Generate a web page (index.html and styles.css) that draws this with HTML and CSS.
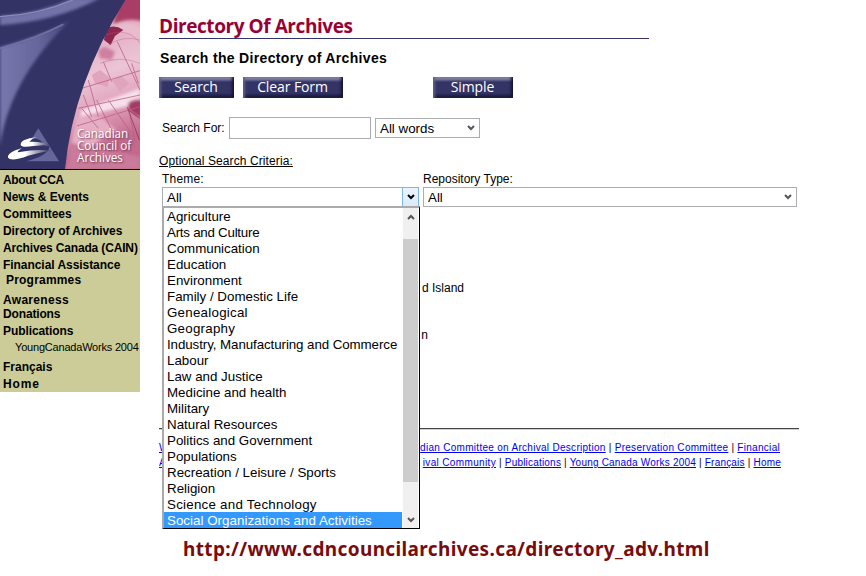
FILE: index.html
```html
<!DOCTYPE html>
<html lang="en">
<head>
<meta charset="utf-8">
<title>Directory Of Archives</title>
<link rel="stylesheet" href="styles.css">
</head>
<body>
<div class="page">
  <aside class="sidebar">
    <div class="banner">
      <svg class="art" viewBox="0 0 420 507" preserveAspectRatio="none" aria-hidden="true">
        <defs>
          <linearGradient id="photo" x1="0" y1="0" x2="0.3" y2="1">
            <stop offset="0" stop-color="#a83a62"/><stop offset=".13" stop-color="#b04a70"/><stop offset=".22" stop-color="#dc9db5"/><stop offset=".6" stop-color="#ecc5d5"/><stop offset=".8" stop-color="#dfa0b9"/><stop offset="1" stop-color="#c2698c"/>
          </linearGradient>
          <linearGradient id="sail" x1="0" y1="0" x2="1" y2="0">
            <stop offset="0" stop-color="#7777ad"/><stop offset=".55" stop-color="#66669c"/><stop offset="1" stop-color="#444479"/>
          </linearGradient>
          <linearGradient id="swoosh" x1="0" y1="0" x2="1" y2="0">
            <stop offset="0" stop-color="#fff"/><stop offset=".4" stop-color="#fff"/><stop offset="1" stop-color="#333366"/>
          </linearGradient>
          <filter id="b1" x="-20%" y="-20%" width="140%" height="140%"><feGaussianBlur stdDeviation="1.2"/></filter>
          <filter id="b2" x="-20%" y="-20%" width="140%" height="140%"><feGaussianBlur stdDeviation="2"/></filter>
          <filter id="b5" x="-20%" y="-20%" width="140%" height="140%"><feGaussianBlur stdDeviation="5"/></filter>
        </defs>
        <rect width="420" height="507" fill="url(#photo)"/>
        <g filter="url(#b5)">
          <path d="M360 -10H430V65Q390 50 340 72Z" fill="#aa3d66"/>
          <path d="M340 78Q390 62 425 85V125Q380 85 320 105Z" fill="#e9bccd"/>
          <path d="M295 150L315 140L345 155L335 180L300 175Z" fill="#cf7f9f"/>
          <path d="M245 330L420 265V310L240 350Z" fill="#f6dfe8"/>
          <path d="M385 310Q400 295 425 300V350Q400 345 385 325Z" fill="#a43a64"/>
          <path d="M230 350L300 350L350 390L270 440L215 430Z" fill="#e6aec3"/>
          <path d="M200 507L215 430L420 470V507Z" fill="#ca7a9a"/>
        </g>
        <g filter="url(#b2)">
          <path d="M318 85Q345 72 370 90L345 108L332 135L312 120Z" fill="#8c2850"/>
          <path d="M275 225L300 210L330 235L322 262L285 250Z M335 240L365 228L388 250L360 275Z" fill="#e0a5bb"/>
        </g>
        <g filter="url(#b1)" fill="none" stroke="#b85c82" stroke-width="3" opacity=".75">
          <path d="M300 190Q360 165 420 190M325 135Q370 105 420 120M318 105Q385 80 420 130" opacity=".5"/>
          <path d="M245 265L420 212M235 325L420 285M230 378L420 320"/>
          <path d="M310 185L335 245M352 125L420 270M395 190L415 250M265 240L295 350M250 285L275 350M245 325L295 385M290 300L335 390M325 300L392 397M386 325L405 425"/>
          <path d="M385 330L420 355M382 322L418 420" stroke="#8f2e55"/>
        </g>
        <path d="M0 0H376Q220 250 195 507H0Z" fill="#333366"/>
        <path d="M0 76V48Q115 42 219 -5H300Q165 65 0 76Z" fill="#7272a8" filter="url(#b5)"/>
        <path d="M0 50Q120 43 218 0" stroke="#8e8ebc" stroke-width="4" fill="none" filter="url(#b2)"/>
        <path d="M0 142Q110 112 210 62Q70 195 20 350Q5 400 0 440Z" fill="url(#sail)" filter="url(#b5)"/>
        <path d="M0 145Q110 115 190 73" stroke="#7070a4" stroke-width="5" fill="none" filter="url(#b2)"/>
        <path d="M115 385L177 484H78Q150 465 148 437H135Q120 413 96 415Z" fill="#66669b"/>
        <path d="M111 411Q60 418 62 434Q64 444 100 438L151 434Q125 424 88 425Q96 415 111 411Z" fill="url(#swoosh)"/>
        <path d="M66 444Q20 458 24 473Q34 486 84 467Q120 456 153 452Q110 446 60 456Q44 459 66 444Z" fill="url(#swoosh)"/>
      </svg>
      <div class="org">Canadian<br>Council of<br>Archives</div>
    </div>
    <nav class="menu">
      <a class="m1">About CCA</a>
      <a class="m2">News &amp; Events</a>
      <a class="m3">Committees</a>
      <a class="m4">Directory of Archives</a>
      <a class="m5">Archives Canada (CAIN)</a>
      <a class="m6">Financial Assistance</a>
      <a class="m7">Programmes</a>
      <a class="m8">Awareness</a>
      <a class="m9">Donations</a>
      <a class="m10">Publications</a>
      <a class="m11">YoungCanadaWorks 2004</a>
      <a class="m12">Français</a>
      <a class="m13">Home</a>
    </nav>
  </aside>
  <main class="main">
    <h1><span>Directory Of Archives</span></h1>
    <h2><span>Search the Directory of Archives</span></h2>
    <div class="buttons">
      <a class="btn search">Search</a>
      <a class="btn clear">Clear Form</a>
      <a class="btn simple">Simple</a>
    </div>
    <div class="query">
      <span class="qlabel">Search For:</span>
      <div class="input"></div>
      <div class="select words"><span>All words</span><svg class="chev" viewBox="0 0 8 6"><path d="M1 1L4 4L7 1"/></svg></div>
    </div>
    <div class="optional"><span>Optional Search Criteria:</span></div>
    <div class="fields">
      <div class="field theme">
        <div class="flabel"><span class="tl">Theme:</span></div>
        <div class="select"><span>All</span><div class="drop"><svg class="chev" viewBox="0 0 8 6"><path d="M1 1L4 4L7 1"/></svg></div></div>
        <div class="popup">
          <ul>
            <li>Agriculture</li>
            <li>Arts and Culture</li>
            <li>Communication</li>
            <li>Education</li>
            <li>Environment</li>
            <li>Family / Domestic Life</li>
            <li class="loose">Genealogical</li>
            <li class="loose">Geography</li>
            <li class="snug">Industry, Manufacturing and Commerce</li>
            <li>Labour</li>
            <li>Law and Justice</li>
            <li>Medicine and health</li>
            <li>Military</li>
            <li>Natural Resources</li>
            <li>Politics and Government</li>
            <li>Populations</li>
            <li>Recreation / Leisure / Sports</li>
            <li>Religion</li>
            <li class="loose">Science and Technology</li>
            <li class="on">Social Organizations and Activities</li>
          </ul>
          <div class="scroll">
            <svg class="chev" viewBox="0 0 8 6"><path d="M1 5L4 2L7 5"/></svg>
            <div class="thumb"></div>
            <svg class="chev" viewBox="0 0 8 6"><path d="M1 1L4 4L7 1"/></svg>
          </div>
        </div>
      </div>
      <div class="field repo">
        <div class="flabel"><span class="rl">Repository Type:</span></div>
        <div class="select"><span>All</span><svg class="chev" viewBox="0 0 8 6"><path d="M1 1L4 4L7 1"/></svg></div>
      </div>
    </div>
    <div class="provinces">
      <div class="pei">d Island</div>
      <div class="sask">n</div>
    </div>
    <hr>
    <footer>
      <div class="row r1"><a>W</a><span><a>dian Committee on Archival Description</a> | <a>Preservation Committee</a> | <a>Financial</a></span></div>
      <div class="row r2"><a>A</a><span><a class="wide">ival Community</a> | <a>Publications</a> | <a>Young Canada Works 2004</a> | <a>Français</a> | <a>Home</a></span></div>
    </footer>
    <div class="url"><span>http://www.cdncouncilarchives.ca/directory_adv.html</span></div>
  </main>
</div>
</body>
</html>
```
FILE: styles.css
```css
* { box-sizing: border-box; }
body { margin: 0; background: #fff; color: #000; font: 12px/16px "Liberation Sans", Arial, sans-serif; }
.page { display: flex; width: 866px; height: 576px; overflow: hidden; }
.sidebar { width: 140px; height: 392px; background: #cccc99; flex: none; }
.banner { position: relative; height: 170px; border-bottom: 1px solid #000; }
.art { display: block; width: 140px; height: 169px; }
.org { position: absolute; left: 77px; top: 127px; font: 11.7px/12px "Open Sans", sans-serif; color: #fff; text-shadow: 1px 1px 2px #6d3450; white-space: nowrap; }
.menu { display: flex; flex-direction: column; padding: 2px 0 0 3px; font-weight: bold; white-space: nowrap; }
.menu a { height: 17px; line-height: 17px; }
.menu .m1 { letter-spacing: -.35px; }
.menu .m4 { letter-spacing: -.08px; }
.menu .m5 { letter-spacing: -.15px; }
.menu .m6 { height: 15px; letter-spacing: -.05px; }
.menu .m7 { height: 20px; padding-left: 3px; letter-spacing: .2px; }
.menu .m8 { height: 14px; letter-spacing: .3px; }
.menu .m9 { letter-spacing: -.15px; }
.menu .m10 { height: 16px; letter-spacing: -.08px; }
.menu .m11 { height: 20px; padding-left: 12px; font-size: 11px; font-weight: normal; letter-spacing: -.2px; }
.menu .m13 { letter-spacing: .9px; }

.main { flex: 1; padding-left: 19px; white-space: nowrap; }
h1 { margin: 0; width: 490px; height: 39px; border-bottom: 1px solid #333366; padding-top: 13px; font: bold 19px/26px "Open Sans", sans-serif; letter-spacing: -.43px; color: #990033; }
h2 { margin: 0; height: 38px; padding: 11px 0 0 1px; font: bold 14px/16px "Liberation Sans", sans-serif; letter-spacing: .33px; }
.buttons { display: flex; height: 21px; }
.btn { height: 21px; padding-right: 1px; color: #fff; text-align: center; font: 14px/20px "Open Sans", sans-serif; letter-spacing: -.1px; background: linear-gradient(#9494ae 0, #7c7ca0 2px, #333366 5px, #333366 16px, #111133 21px); box-shadow: inset 3px 0 3px -1px #62628a, inset -3px 0 3px -1px #111133; }
.search { width: 75px; }
.clear { width: 100px; margin-left: 9px; }
.simple { width: 80px; margin-left: 90px; }
.query { display: flex; height: 56px; padding-top: 19px; }
.qlabel { width: 70px; padding: 3px 0 0 3px; }
.input { width: 142px; height: 22px; border: 1px solid #abadb3; }
.select { display: flex; align-items: center; justify-content: space-between; height: 20px; border: 1px solid #abadb3; padding: 0 4px; font-size: 13.33px; }
.select > span { padding-top: 2px; }
.words { width: 105px; margin: 1px 0 0 4px; }
.chev { width: 8px; height: 6px; fill: none; stroke: #555; stroke-width: 2; flex: none; }
.optional { height: 17px; margin-top: -1px; line-height: 16px; }
.optional span { text-decoration: underline; letter-spacing: .1px; }
.fields { display: flex; padding-left: 3px; }
.flabel { height: 16px; line-height: 16px; margin-top: 1px; }
.tl { letter-spacing: .2px; }
.theme { position: relative; width: 257px; }
.repo { width: 374px; margin-left: 4px; }
.theme .select { padding-right: 0; border-right: 0; }
.drop { display: flex; align-items: center; justify-content: center; width: 17px; height: 20px; border: 1px solid #7eb4ea; background: linear-gradient(#ecf4fc, #d9eafb); }
.drop .chev { stroke: #000; }
.popup { position: absolute; z-index: 2; left: 0; top: 36px; width: 258px; height: 323px; display: flex; background: #fff; border-left: 2px solid #aaa; border-top: 2px solid #aaa; border-right: 1px solid #000; border-bottom: 1px solid #000; }
.popup ul { margin: 0; padding: 0; width: 238px; list-style: none; }
.popup li { height: 16px; padding-left: 3px; font-size: 13.33px; line-height: 18px; }
.popup li:nth-child(2) { letter-spacing: -.25px; }
.popup .snug { letter-spacing: -.08px; }
.popup .loose { letter-spacing: .25px; }
.popup .on { background: #3399ff; color: #fff; letter-spacing: .03px; }
.scroll { width: 15px; margin-left: 1px; height: 320px; display: flex; flex-direction: column; align-items: center; justify-content: space-between; padding: 6px 0 5px; background: #f0f0f0; }
.thumb { width: 15px; height: 243px; margin-bottom: 16px; background: #cdcdcd; }
.provinces { height: 221px; padding-top: 73px; }
.pei { width: 305px; text-align: right; height: 47px; }
.sask { width: 269px; text-align: right; }
hr { margin: 0; width: 640px; height: 2px; border: 0; background: #d0d0d0; border-top: 1px solid #444; }
footer { padding-top: 10px; font-size: 10px; line-height: 15px; letter-spacing: .29px; }
footer a { color: #0000ee; text-decoration: underline; }
.row { display: flex; justify-content: space-between; height: 15px; }
.r1 { width: 621px; }
.r2 { width: 622px; letter-spacing: .2px; }
.wide { letter-spacing: .35px; }
.url { padding: 66px 0 0 24px; font: bold 19px/26px "Noto Sans", sans-serif; letter-spacing: .36px; color: #770b0e; }
```
